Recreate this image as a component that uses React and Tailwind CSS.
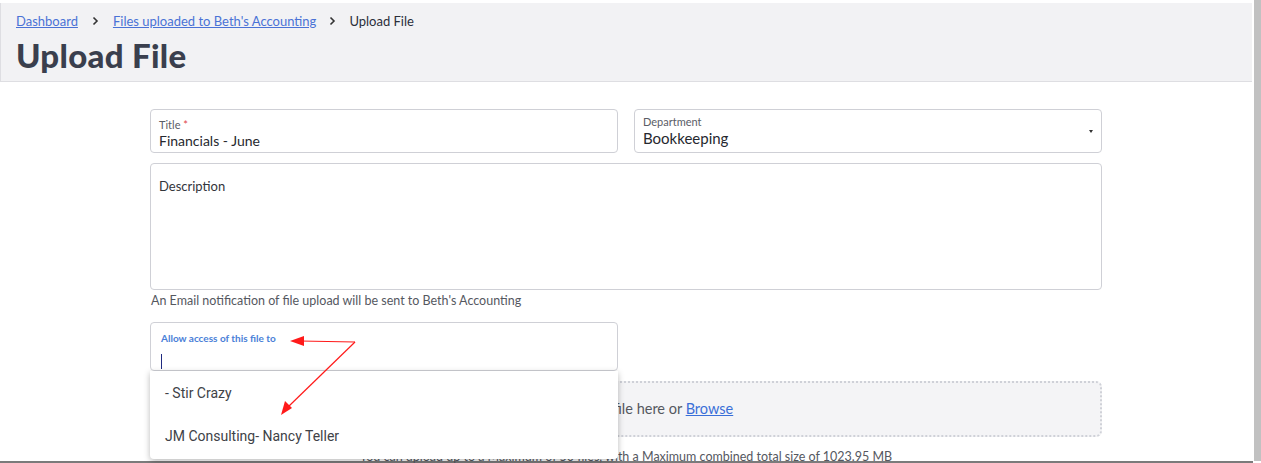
export default function App() {
  return (
    <div className="flex h-[463px] w-[1261px] flex-col overflow-hidden bg-white font-['Lato',sans-serif]">
      <div className="flex min-h-0 flex-1">
        <div className="flex w-[1252px] flex-col">
          <div className="h-[3px] shrink-0 bg-white" />
          <header className="h-[79px] shrink-0 border-b border-l border-[#dedee2] bg-[#f2f2f4] px-[15px] pt-[9px]">
            <nav className="flex items-center text-[13px] leading-[18px]">
              <a href="#" className="text-[#4a72d6] underline">Dashboard</a>
              <Chevron className="mx-[14px]" />
              <a href="#" className="text-[#4a72d6] underline">Files uploaded to Beth's Accounting</a>
              <Chevron className="mx-[13px]" />
              <span className="text-[#2b2f3a]">Upload File</span>
            </nav>
            <h1 className="mt-[6px] text-[33px] font-black leading-[38px] tracking-[0.3px] text-[#3a3f4d]">Upload File</h1>
          </header>

          <main className="relative shrink-0 px-[150px] pt-[27px]">
            <div className="grid grid-cols-2 gap-[16px]">
              <div className="h-[44px] rounded-[4px] border border-[#cfd0d6] px-[8px] pt-[8px]">
                <div className="text-[11px] leading-[13px] text-[#5a5d66]">
                  Title <span className="text-[#e0474c]">*</span>
                </div>
                <div className="mt-[1px] text-[14px] leading-[18px] text-[#26282e]">Financials - June</div>
              </div>
              <div className="flex h-[44px] items-center rounded-[4px] border border-[#cfd0d6] pl-[8px] pr-[8px]">
                <div className="flex-1">
                  <div className="text-[11px] leading-[13px] text-[#5a5d66]">Department</div>
                  <div className="mt-[1px] text-[15px] leading-[18px] text-[#26282e]">Bookkeeping</div>
                </div>
                <div className="h-0 w-0 border-x-[2px] border-t-[3px] border-x-transparent border-t-[#333]" />
              </div>
            </div>

            <div className="mt-[10px] h-[127px] rounded-[4px] border border-[#cfd0d6] px-[8px] pt-[14px]">
              <div className="text-[13px] leading-[16px] text-[#33353b]">Description</div>
            </div>

            <p className="mt-[4px] pl-[1px] text-[12.5px] leading-[14px] text-[#55585f]">
              An Email notification of file upload will be sent to Beth's Accounting
            </p>

            <div className="relative mt-[14px] w-[468px]">
              <div className="h-[49px] rounded-[4px] border border-[#cfd0d6] px-[10px] pt-[9px]">
                <div className="text-[10px] font-bold leading-[12px] text-[#4a80d8]">Allow access of this file to</div>
                <div className="mt-[10px] h-[15px] w-[1px] bg-[#1f2a80]" />
              </div>
              <div className="absolute left-0 top-full z-10 h-[88px] w-full rounded-b-[4px] bg-white font-['Roboto',sans-serif] shadow-[0_2px_6px_rgba(0,0,0,0.28)]">
                <div className="px-[15px] pt-[13px] text-[14px] leading-[18px] text-[#404247]">- Stir Crazy</div>
                <div className="px-[15px] pt-[25px] text-[14px] leading-[18px] text-[#404247]">JM Consulting- Nancy Teller</div>
              </div>
            </div>

            <div className="mt-[10px] flex h-[56px] items-center justify-center rounded-[6px] border-[2px] border-dotted border-[#cfd1d8] bg-[#f4f4f6] text-[14.5px] text-[#55585f]">
              Drag and drop file here or&nbsp;<a href="#" className="text-[#3a6fd8] underline">Browse</a>
            </div>

            <p className="mt-[12px] text-center text-[12.5px] leading-[16px] text-[#55585f]">
              You can upload up to a Maximum of 50 files, with a Maximum combined total size of 1023.95 MB
            </p>

            <svg className="pointer-events-none absolute left-0 top-0 z-20" width="1252" height="380">
              <g stroke="#ff1a1a" strokeWidth="1.2" fill="none">
                <line x1="355" y1="260" x2="300" y2="259" />
                <line x1="355" y1="260" x2="288" y2="325" />
              </g>
              <polygon points="290,259 304,254 304,264" fill="#ff1a1a" />
              <polygon points="281,333 285,319 292,326" fill="#ff1a1a" />
            </svg>
          </main>
        </div>
        <div className="w-[2px] bg-white" />
        <div className="w-[7px] bg-[#c1c1c1]" />
      </div>
      <div className="h-[2px] w-[1253px] bg-[#7b7b7b]" />
    </div>
  )
}

function Chevron({ className = '' }) {
  return (
    <svg className={className} width="7" height="10" viewBox="0 0 7 10">
      <path d="M1.5 1.5 L5 5 L1.5 8.5" stroke="#333" strokeWidth="1.6" fill="none" />
    </svg>
  )
}
